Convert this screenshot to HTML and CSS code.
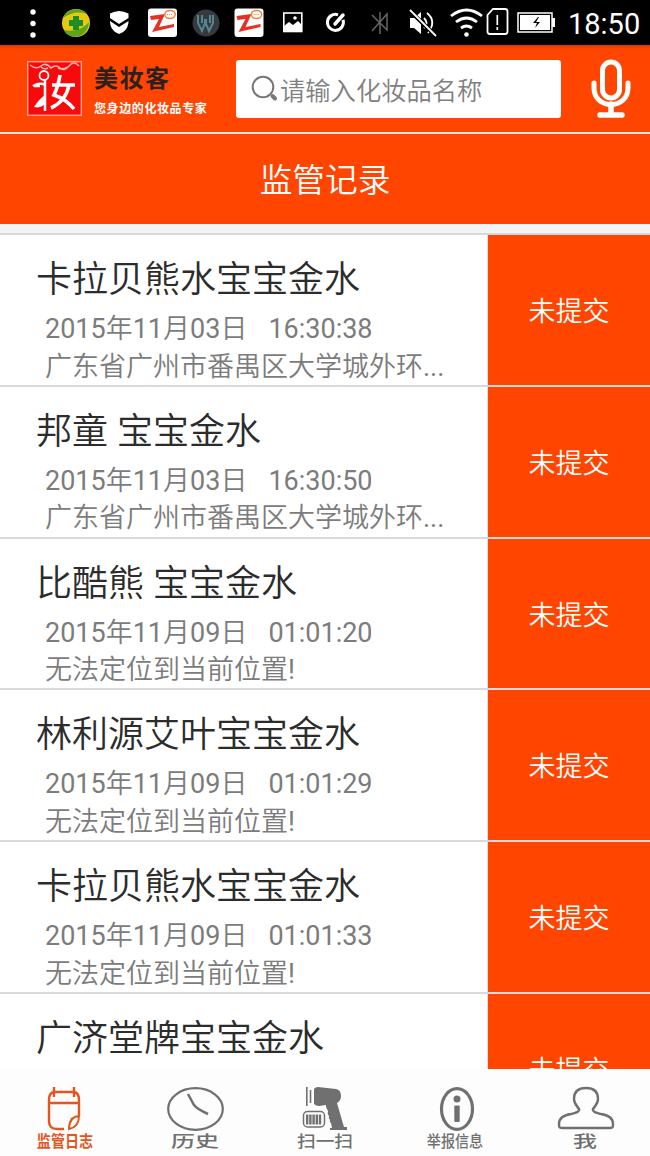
FILE: index.html
```html
<!DOCTYPE html>
<html lang="zh-CN">
<head>
    <meta charset="UTF-8">
    <meta name="viewport" content="width=device-width, initial-scale=1.0">
    <title>监管记录</title>
    <link rel="stylesheet" href="styles.css">
</head>
<body>
    <!-- Status bar -->
    <div class="status-bar">
        <svg class="status-icons" width="560" height="45" viewBox="0 0 560 45">
            <g fill="#fff">
                <circle cx="33" cy="12" r="2.7"/>
                <circle cx="33" cy="23.500" r="2.700"/>
                <circle cx="33" cy="35" r="2.7"/>
            </g>
            <!-- Safety ball -->
            <circle cx="76" cy="23" r="14" fill="#e4c915"/>
            <path d="M63 18c4-9 17-12 24-4-8-3-17-1-24 4zM64 30c8 2 18 0 25-8-1 17-20 19-25 8z" fill="#5ca51c"/>
            <path d="M73 16h6v4h4v6h-4v4h-6v-4h-4v-6h4z" fill="#218c25"/>
            <!-- Shield -->
            <path d="M110 13.500q9-5 18.500 0v4.500l-9.500 6-9-6z" fill="#fff"/>
            <path d="M110 21l9 6 9.500-6c0 6-3 11-9.500 13-6-2-9-7-9-13z" fill="#fff"/>
            <!-- Transfer app, shown twice -->
            <g id="zapya">
                <rect x="148" y="8.500" width="29" height="28.500" rx="3" fill="#fff"/>
                <path d="M150 16l15-2-6 13 15-3v3l-22 5 7-13-8 1z" fill="#e33329"/>
                <ellipse cx="170" cy="14.500" rx="5.200" ry="4" fill="#fff" stroke="#ef8135" stroke-width="1.500"/>
                <path d="M167 14.500h6" stroke="#ef8135" stroke-dasharray="1 1"/>
            </g>
            <circle cx="206" cy="23" r="13.500" fill="#343a3e"/>
            <path d="M198 15v8l4 8 3-8v-4M206 19v5l3 7 4-8v-8M202 15v8M210 15v8" fill="none" stroke="#56858f" stroke-width="2"/>
            <use href="#zapya" x="86.500"/>
            <!-- Picture -->
            <rect x="283.800" y="13" width="18" height="18.500" fill="none" stroke="#fff" stroke-width="1.600"/>
            <path d="M284 26l5-4 4 3 5-4 4 4v7h-18z" fill="#fff"/>
            <circle cx="295" cy="18" r="1.800" fill="#fff"/>
            <!-- Clean up -->
            <path d="M338 14.800a8 8 0 1 0 5 5" fill="none" stroke="#fff" stroke-width="3"/>
            <path d="M335 24l8-9" stroke="#fff" stroke-width="3.500" stroke-linecap="round"/>
            <!-- Bluetooth -->
            <path d="M372 15l15 15V14l-15 17M380 12v22" fill="none" stroke="#666" stroke-width="1.500"/>
            <!-- Muted -->
            <path d="M410 18h4l7-6v22l-7-6h-4z" fill="#fff"/>
            <path d="M424 18q5 5 0 10M427 13q10 8 1 20" fill="none" stroke="#fff" stroke-width="1.800"/>
            <path d="M409 10l27 26" stroke="#000" stroke-width="4"/>
            <path d="M410 10l26 26" stroke="#fff" stroke-width="1.800"/>
            <!-- Wifi -->
            <g fill="none" stroke="#fff" stroke-width="2.800">
                <path d="M451 16q15.500-12 31 0M456 22q10.500-8 21 0M461 28q5.500-4 11 0"/>
            </g>
            <circle cx="466.500" cy="34.500" r="2.300" fill="#fff"/>
            <!-- SIM card -->
            <path d="M493 9h12q2.500 0 2.500 2.500v20q0 2.500-2.500 2.500h-15q-2.500 0-2.500-2.500V15z" fill="none" stroke="#fff" stroke-width="1.800"/>
            <path d="M497.300 15v10M497.300 27v3" stroke="#fff" stroke-width="1.700"/>
            <!-- Battery -->
            <rect x="518" y="13" width="34" height="19" fill="none" stroke="#fff" stroke-width="1.500"/>
            <rect x="520" y="15" width="30" height="15" fill="#fff"/>
            <path d="M552 18h3v9h-3z" fill="#fff"/>
            <path d="M538 17l-5 6h4l-2 5 5-6h-4l3-5z" fill="#000"/>
        </svg>
        <span class="clock">18:50</span>
    </div>

    <!-- App header -->
    <header class="header">
        <svg class="logo" width="55" height="55" viewBox="0 0 55 55">
            <rect x=".7" y=".7" width="53.600" height="53.600" fill="#f8090b" stroke="#ffa496" stroke-width="1.400"/>
            <path d="M3 4q6 5 11 1t10 2q5-4 9 0t9-2 10 0M14 6q3 3 7 1M31 7q5 2 9-1" fill="none" stroke="#ffb5ad" stroke-width="1.500"/>
            <circle cx="17" cy="14.500" r="4.500" fill="none" stroke="#fff" stroke-width="1.800"/>
            <path d="M18 19v31M18 24q-5-3-12 1M7 25h6" fill="none" stroke="#fff" stroke-width="2.500"/>
            <path d="M18 34q-6 4-11 12 8 2 12-5z" fill="#fff"/>
            <path d="M33 14q-2 12-6 20 12 4 20 14M42 24q-3 16-18 23M25 24h23" fill="none" stroke="#fff" stroke-width="3.600"/>
        </svg>
        <div class="brand">
            <div class="brand-name">美妆客</div>
            <div class="brand-slogan">您身边的化妆品专家</div>
        </div>
        <div class="search">
            <svg width="28" height="28" viewBox="0 0 28 28">
                <circle cx="12" cy="12" r="10.300" fill="none" stroke="#777" stroke-width="2"/>
                <path d="M21.500 21l2.500 2.500" stroke="#777" stroke-width="4" stroke-linecap="round"/>
            </svg>
            <span>请输入化妆品名称</span>
        </div>
        <svg class="mic" width="40" height="60" viewBox="0 0 40 60" fill="none" stroke="#fff">
            <rect x="11.500" y="3" width="17" height="36" rx="8.500" stroke-width="5"/>
            <path d="M3 24v5c0 22 34 22 34 0v-5" stroke-width="5" stroke-linecap="round"/>
            <path d="M20 45v11M9 56h22" stroke-width="5.500" stroke-linecap="round"/>
        </svg>
    </header>

    <h1 class="page-title">监管记录</h1>

    <!-- Records -->
    <div class="records">
        <div class="record">
            <div class="info">
                <h2>卡拉贝熊水宝宝金水</h2>
                <p><span class="date">2015年11月03日</span>16:30:38</p>
                <p>广东省广州市番禺区大学城外环...</p>
            </div>
            <div class="state">未提交</div>
        </div>
        <div class="record">
            <div class="info">
                <h2>邦童 宝宝金水</h2>
                <p><span class="date">2015年11月03日</span>16:30:50</p>
                <p>广东省广州市番禺区大学城外环...</p>
            </div>
            <div class="state">未提交</div>
        </div>
        <div class="record">
            <div class="info">
                <h2>比酷熊 宝宝金水</h2>
                <p><span class="date">2015年11月09日</span>01:01:20</p>
                <p>无法定位到当前位置!</p>
            </div>
            <div class="state">未提交</div>
        </div>
        <div class="record">
            <div class="info">
                <h2>林利源艾叶宝宝金水</h2>
                <p><span class="date">2015年11月09日</span>01:01:29</p>
                <p>无法定位到当前位置!</p>
            </div>
            <div class="state">未提交</div>
        </div>
        <div class="record">
            <div class="info">
                <h2>卡拉贝熊水宝宝金水</h2>
                <p><span class="date">2015年11月09日</span>01:01:33</p>
                <p>无法定位到当前位置!</p>
            </div>
            <div class="state">未提交</div>
        </div>
        <div class="record">
            <div class="info">
                <h2>广济堂牌宝宝金水</h2>
            </div>
            <div class="state">未提交</div>
        </div>
    </div>

    <!-- Bottom tabs -->
    <nav class="tabs">
        <div class="tab active">
            <svg width="60" height="46" viewBox="0 0 60 46" fill="none" stroke="currentColor" stroke-width="2.400">
                <path d="M29 43h-7q-8 0-8-8V14q0-8 6-8h18q6 0 6 8v16M14 17h30M19 1v10M39 1v10"/>
                <path d="M44 30q0 11-10 13 0-12 10-13zM34 43q0-6 3-11" stroke-width="2"/>
            </svg>
            <span class="narrow">监管日志</span>
        </div>
        <div class="tab">
            <svg width="60" height="46" viewBox="0 0 60 46" fill="none" stroke="currentColor" stroke-width="2.200">
                <ellipse cx="30.500" cy="23" rx="27.300" ry="20.800"/>
                <path d="M23 8l6 11q3 4 14 9" stroke-width="2.500"/>
            </svg>
            <span class="wide">历史</span>
        </div>
        <div class="tab">
            <svg width="60" height="46" viewBox="0 0 60 46" fill="currentColor">
                <path d="M19 3q1-2 4-2l18 2q5 1 5 7 0 5-4 7l7 24h3v3H35v-2h2l-1-5q-2-1-1-3-2-2-1-4-2-2-1-5l-2-4v-2l-7 1q-3 0-5-2z"/>
                <path d="M11.800 1v19M15.500 4v13" stroke="currentColor" stroke-width="1.600"/>
                <rect x="8.500" y="25.500" width="21" height="15.500" rx="4" fill="none" stroke="currentColor" stroke-width="1.500"/>
                <path d="M11 33.500h16" stroke="currentColor" stroke-width="10" stroke-dasharray="2.400 .8"/>
            </svg>
            <span class="scan">扫一扫</span>
        </div>
        <div class="tab">
            <svg width="60" height="46" viewBox="0 0 60 46" fill="currentColor">
                <ellipse cx="32" cy="23" rx="15.500" ry="20.300" fill="none" stroke="currentColor" stroke-width="3.200"/>
                <circle cx="32" cy="13" r="3.500"/>
                <rect x="29.300" y="19.500" width="5.400" height="16.500" rx="1"/>
            </svg>
            <span class="narrow">举报信息</span>
        </div>
        <div class="tab">
            <svg width="60" height="46" viewBox="0 0 60 46" fill="none" stroke="currentColor" stroke-width="2.400">
                <path d="M31 2c-8 0-12 4-12 11 0 5 3 7 5 10 1 3-4 4-8 5-7 1-12 4-12 10 0 3 0 4 3 4h48c3 0 3-1 3-4 0-6-5-9-12-10-4-1-9-2-8-5 2-3 5-5 5-10 0-7-4-11-12-11z"/>
            </svg>
            <span class="wide">我</span>
        </div>
    </nav>
</body>
</html>
```
FILE: styles.css
```css
* {
    box-sizing: border-box;
}

body {
    margin: 0;
    height: 1156px;
    display: flex;
    flex-direction: column;
    overflow: hidden;
    background-color: #f3f3f3;
    font-family: Roboto, "Noto Sans CJK SC DemiLight", "Noto Sans CJK SC", sans-serif;
    font-weight: 400;
}

h1, h2, p {
    margin: 0;
    font-weight: inherit;
}

svg {
    display: block;
    flex: none;
}

/* Status bar */
.status-bar {
    display: flex;
    flex: none;
    height: 45px;
    background: #000;
    color: #fff;
}

.clock {
    margin-left: 8px;
    font-size: 29px;
    line-height: 48px;
}

/* Header */
.header {
    display: flex;
    flex: none;
    height: 89px;
    padding-left: 27px;
    background: linear-gradient(#d93a00, #ff4500 4px);
    border-bottom: 2px solid #ffe9df;
}

.logo {
    margin-top: 16px;
}

.brand {
    width: 142px;
    margin-left: 12px;
    padding-top: 16px;
    font-family: "Noto Sans CJK SC", sans-serif;
    font-weight: 700;
    white-space: nowrap;
}

.brand-name {
    color: #2b201c;
    font-size: 24px;
    letter-spacing: 1.500px;
    line-height: 31px;
}

.brand-slogan {
    margin-top: 7px;
    color: #fff;
    font-size: 12px;
    letter-spacing: .6px;
    line-height: 17px;
}

.search {
    display: flex;
    align-items: center;
    width: 325px;
    height: 58px;
    margin-top: 15px;
    padding-left: 15px;
    border-radius: 3px;
    background: #fff;
    color: #808080;
    font-size: 25.300px;
}

.search span {
    margin-left: 1px;
}

.mic {
    margin: 14px 0 0 30px;
}

.page-title {
    flex: none;
    height: 90px;
    background: #ff4500;
    color: #fff;
    font-size: 32.700px;
    line-height: 95px;
    text-align: center;
}

/* Record list */
.records {
    flex: 1;
    margin-top: 9px;
    overflow: hidden;
}

.record {
    display: flex;
    height: 151.750px;
    border-top: 2px solid #d9d9d9;
    background: #fff;
}

.info {
    width: 488px;
    padding: 18px 0 0 36px;
    border-right: 1px solid #ddd;
    white-space: nowrap;
}

.info h2 {
    margin-bottom: 4px;
    color: #2c2c2c;
    font-size: 36px;
    line-height: 54px;
}

.info p {
    padding-left: 9px;
    color: #7c7c7c;
    font-size: 27px;
    line-height: 37.500px;
}

.date {
    margin-right: 21px;
}

.state {
    flex: 1;
    background: #ff4500;
    color: #fff;
    font-size: 27px;
    line-height: 154px;
    text-align: center;
}

/* Bottom tabs */
.tabs {
    display: flex;
    flex: none;
    height: 87px;
    padding-top: 17px;
    background: #fdfdfd;
}

.tab {
    display: flex;
    flex-direction: column;
    align-items: center;
    width: 130px;
    color: #707070;
    font-family: "Noto Sans CJK SC", sans-serif;
    font-size: 16px;
    font-weight: 500;
    line-height: 17px;
    white-space: nowrap;
}

.active {
    color: #e5561f;
    font-weight: 700;
}

.narrow {
    transform: scaleX(.88);
}

.wide {
    transform: scaleX(1.500);
}

.scan {
    transform: scaleX(1.170);
}
```
